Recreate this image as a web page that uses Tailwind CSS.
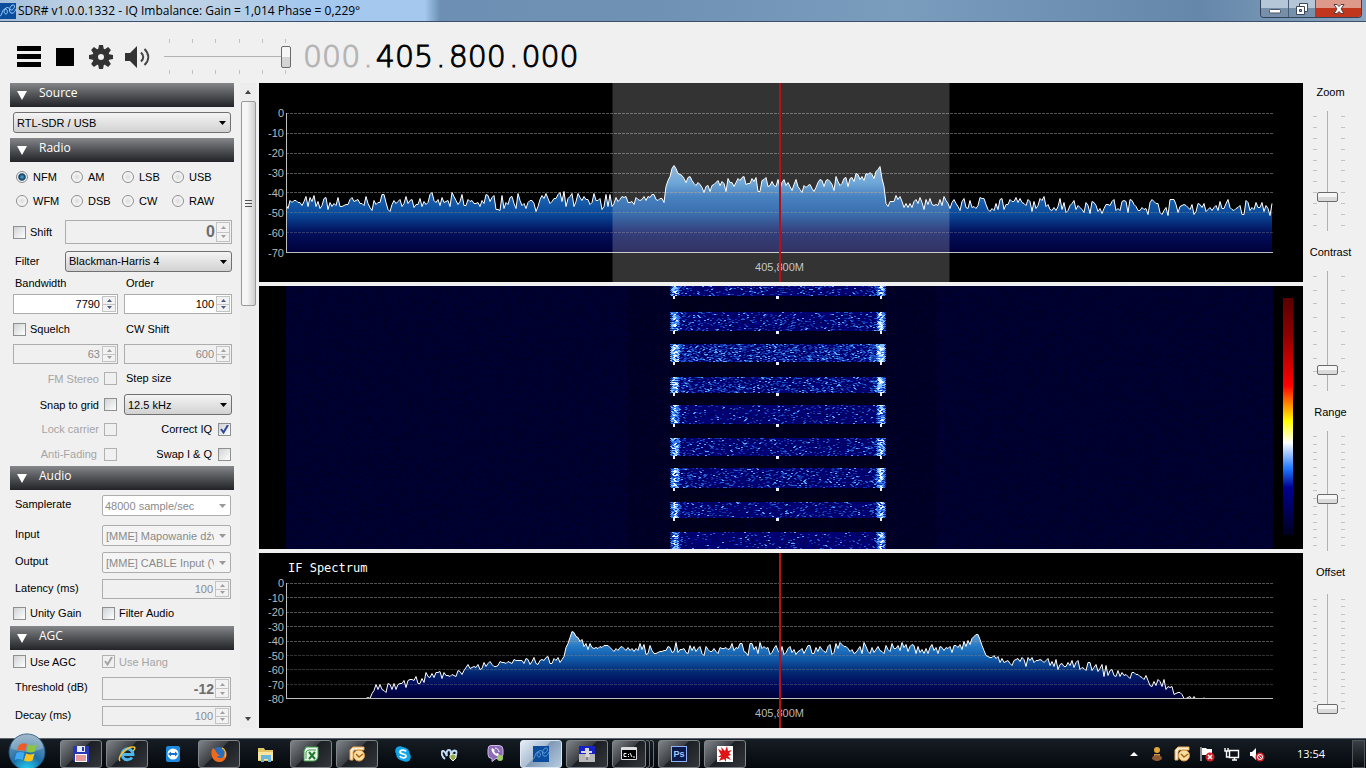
<!DOCTYPE html>
<html lang="en">
<head>
    <meta charset="UTF-8">
    <meta name="viewport" content="width=device-width, initial-scale=1.0">
    <title>SDR# v1.0.0.1332</title>
    <script src="https://cdn.jsdelivr.net/npm/@tailwindcss/browser@4"></script>
</head>
<body class="h-screen flex flex-col overflow-hidden bg-[#f0f0f0] text-black text-[11px] leading-[14px] font-['Liberation_Sans',Arial,sans-serif]">

    <!-- Title bar -->
    <header class="h-[22px] shrink-0 flex items-start justify-between border-b border-[#3c4f68] bg-[linear-gradient(90deg,#a4bfdb_0,#c3d6e8_100px,#b9cfe5_230px,#a4c8ee_300px,#a4c8ee_425px,#6c8fb3_440px,#6f92b4_650px,#7a9cbd_900px,#6587aa_1200px,#8aa5c0_1366px)]">
        <div class="flex items-center gap-[2px] h-[21px]">
            <svg class="w-4 h-4" viewBox="0 0 16 16"><rect width="16" height="16" fill="#0b4d9c"/><path d="M0 13c2 0 2-7 5-7s3 5 1 5-3-4 0-6 4 3 6 2 4-5 1-5-5 7-2 8 4-2 5-4" fill="none" stroke="#9fd0ff"/></svg>
            <h1 class="text-[12px] leading-[16px] font-['Open_Sans',sans-serif]">SDR# v1.0.0.1332 - IQ Imbalance: Gain = 1,014 Phase = 0,229°</h1>
        </div>
        <div class="flex h-[18px] mr-1 rounded-b-[4px] overflow-hidden border border-t-0 border-[#33445a]">
            <button aria-label="Minimize" class="w-[28px] flex items-center justify-center border-r border-[#4a5d74] bg-linear-to-b from-[#b4c6d8] from-50% to-[#7690ab] to-50%">
                <svg width="12" height="10" viewBox="0 0 12 10"><rect x=".5" y="5.500" width="11" height="3.500" rx="1" fill="#fff" stroke="#4b5462"/></svg>
            </button>
            <button aria-label="Restore" class="w-[27px] flex items-center justify-center border-r border-[#4a5d74] bg-linear-to-b from-[#b4c6d8] from-50% to-[#7690ab] to-50%">
                <svg width="12" height="12" viewBox="0 0 12 12" fill="#fff" stroke="#3f4858"><path d="M3.500.5h8v8h-8z"/><path d="M.5 3.500h8v8h-8z"/><path d="M3.500 6.500h2v2h-2z" fill="#8095ad"/></svg>
            </button>
            <button aria-label="Close" class="w-[45px] flex items-center justify-center bg-linear-to-b from-[#dd9a8b] from-50% to-[#c1371d] to-50%">
                <svg width="12" height="10" viewBox="0 0 12 10"><path d="M1 .5h3l2 2 2-2h3L8 5l3 4.500H8l-2-2-2 2H1L4 5z" fill="#fff" stroke="#5a3a3a"/></svg>
            </button>
        </div>
    </header>

    <!-- Toolbar -->
    <div class="h-[61px] shrink-0 flex items-center pl-[17px] pt-[8px]">
        <button aria-label="Menu"><svg width="24" height="22" viewBox="0 0 24 22"><path d="M0 0h24v5H0zM0 8h24v5H0zM0 16h24v5H0z"/></svg></button>
        <button aria-label="Stop" class="ml-[15px] size-[18px] bg-black"></button>
        <button aria-label="Settings" class="ml-[15px]">
            <svg width="24" height="24" viewBox="0 0 24 24"><g fill="#333"><circle cx="12" cy="12" r="8.500"/><g id="tooth"><path d="M10 0h4l1 5H9zM10 24h4l1-5H9z"/></g><use href="#tooth" transform="rotate(45 12 12)"/><use href="#tooth" transform="rotate(90 12 12)"/><use href="#tooth" transform="rotate(135 12 12)"/></g><circle cx="12" cy="12" r="3" fill="#f0f0f0"/></svg>
        </button>
        <button aria-label="Mute" class="ml-[11px]">
            <svg width="26" height="24" viewBox="0 0 26 24"><path d="M1 8h5l7-7v22l-7-7H1z" fill="#333"/><path d="M17 7.500c3 3 3 6 0 9M20.500 4c5 5 5 11 0 16" fill="none" stroke="#444" stroke-width="2"/></svg>
        </button>
        <div class="ml-[14px] w-[127px] flex flex-col">
            <div data-ticks="6" class="flex justify-between px-[5px]"></div>
            <input type="range" aria-label="Volume" min="0" max="100" value="100" class="my-[2px] appearance-none w-full h-[23px] bg-[linear-gradient(#b2b2b2,#b2b2b2)] bg-[length:100%_1px] bg-center bg-no-repeat [&::-webkit-slider-thumb]:appearance-none [&::-webkit-slider-thumb]:w-[10px] [&::-webkit-slider-thumb]:h-[22px] [&::-webkit-slider-thumb]:rounded-[2px] [&::-webkit-slider-thumb]:border [&::-webkit-slider-thumb]:border-[#6b6b6b] [&::-webkit-slider-thumb]:bg-linear-to-b [&::-webkit-slider-thumb]:from-[#f6f6f6] [&::-webkit-slider-thumb]:from-50% [&::-webkit-slider-thumb]:to-[#d4d4d4] [&::-webkit-slider-thumb]:to-50%">
            <div data-ticks="6" class="flex justify-between px-[5px]"></div>
        </div>
        <div class="ml-[12px] flex text-[30px] leading-[36px] font-extralight font-['DejaVu_Sans',sans-serif] [-webkit-text-stroke:1px_currentColor]">
            <span class="text-[#b4b4b4]">000<span class="px-[3px]">.</span></span>
            <span>405<span class="px-[3px]">.</span>800<span class="px-[3px]">.</span>000</span>
        </div>
    </div>

    <main class="flex-1 min-h-0 flex pb-[10px]">

        <!-- Side panel -->
        <aside class="w-[259px] shrink-0 flex pl-[10px] gap-[6px] overflow-hidden">
            <div class="w-[224px] overflow-hidden">
                <h2 class="h-[24px] flex items-center gap-[12px] pl-[7px] bg-linear-to-b from-[#86878a] to-[#222428] text-white text-[12px] leading-[20px] font-['Open_Sans',sans-serif]"><svg width="10" height="9"><path d="M0 0h10L5 9z" fill="#fff"/></svg><span class="pb-[4px]">Source</span></h2>
                <div class="h-[31px] flex items-center pl-[3px] pr-[3px]">
                    <div data-select class="relative w-full"><select aria-label="Source" class="appearance-none block w-full h-[21px] pl-[3px] rounded-[3px] border border-[#707070] bg-linear-to-b from-[#f4f4f4] to-[#d2d2d2]"><option>RTL-SDR / USB</option></select></div>
                </div>

                <h2 class="h-[24px] flex items-center gap-[12px] pl-[7px] bg-linear-to-b from-[#86878a] to-[#222428] text-white text-[12px] leading-[20px] font-['Open_Sans',sans-serif]"><svg width="10" height="9"><path d="M0 0h10L5 9z" fill="#fff"/></svg><span class="pb-[4px]">Radio</span></h2>
                <div class="pl-[3px] pr-[2px]">
                    <div id="modes" class="grid grid-cols-[55px_51px_50px_1fr] auto-rows-[24px] items-center pt-[3px] pl-[3px]"></div>
                    <div class="h-[38px] flex items-center">
                        <label class="w-[52px] flex items-center gap-[4px]"><input type="checkbox" class="appearance-none size-[13px] border border-[#8e8f8f] bg-linear-to-br from-[#d0d2d4] to-white">Shift</label>
                        <div data-spin class="flex-1 flex h-[24px] border border-[#adadad] text-[#6d6d6d]"><input type="text" aria-label="Shift" value="0" disabled class="w-0 flex-1 text-right text-[16px] font-bold pr-[1px]"></div>
                    </div>
                    <div class="h-[20px] flex items-center">
                        <label for="filter" class="w-[52px] pl-[2px]">Filter</label>
                        <div data-select class="relative flex-1"><select id="filter" class="appearance-none block w-full h-[21px] pl-[3px] rounded-[3px] border border-[#707070] bg-linear-to-b from-[#f4f4f4] to-[#d2d2d2]"><option>Blackman-Harris 4</option></select></div>
                    </div>
                    <div class="grid grid-cols-[105px_1fr] gap-x-[6px] items-center">
                        <label for="bandwidth" class="h-[23px] leading-[24px] pl-[2px]">Bandwidth</label>
                        <label for="order" class="h-[23px] leading-[24px] pl-[2px]">Order</label>
                        <div data-spin class="flex h-[20px] border border-[#adadad] bg-white"><input type="text" id="bandwidth" value="7790" class="w-0 flex-1 text-right pr-[2px]"></div>
                        <div data-spin class="flex h-[20px] border border-[#adadad] bg-white"><input type="text" id="order" value="100" class="w-0 flex-1 text-right pr-[2px]"></div>
                        <label class="h-[30px] flex items-center gap-[4px]"><input type="checkbox" class="appearance-none size-[13px] border border-[#8e8f8f] bg-linear-to-br from-[#d0d2d4] to-white">Squelch</label>
                        <label for="cwshift" class="h-[30px] leading-[30px] pl-[2px]">CW Shift</label>
                        <div data-spin class="flex h-[20px] border border-[#adadad] text-[#8a8a8a]"><input type="text" aria-label="Squelch level" value="63" disabled class="w-0 flex-1 text-right pr-[2px]"></div>
                        <div data-spin class="flex h-[20px] border border-[#adadad] text-[#8a8a8a]"><input type="text" id="cwshift" value="600" disabled class="w-0 flex-1 text-right pr-[2px]"></div>
                        <label class="h-[29px] flex items-center justify-end gap-[5px] pr-[1px] text-[#a5a5a5]">FM Stereo<input type="checkbox" disabled class="appearance-none size-[13px] border border-[#b1b1b1]"></label>
                        <label for="step" class="h-[29px] leading-[29px] pl-[2px]">Step size</label>
                        <label class="h-[23px] flex items-center justify-end gap-[5px] pr-[1px]">Snap to grid<input type="checkbox" class="appearance-none size-[13px] border border-[#8e8f8f] bg-linear-to-br from-[#d0d2d4] to-white"></label>
                        <div data-select class="relative"><select id="step" class="appearance-none block w-full h-[21px] pl-[3px] rounded-[3px] border border-[#707070] bg-linear-to-b from-[#f4f4f4] to-[#d2d2d2]"><option>12.5 kHz</option></select></div>
                        <label class="h-[26px] flex items-center justify-end gap-[5px] pr-[1px] text-[#a5a5a5]">Lock carrier<input type="checkbox" disabled class="appearance-none size-[13px] border border-[#b1b1b1]"></label>
                        <label class="h-[26px] relative flex items-center justify-end gap-[6px] pr-[1px]">Correct IQ<input type="checkbox" checked class="peer appearance-none size-[13px] border border-[#8e8f8f] bg-linear-to-br from-[#d0d2d4] to-white"><svg class="hidden peer-checked:block absolute right-[3px]" width="9" height="9" viewBox="0 0 9 9"><path d="M1 4l2.500 3.500L8 0" fill="none" stroke="#31479e" stroke-width="2"/></svg></label>
                        <label class="h-[24px] flex items-center justify-end gap-[7px] pr-[1px] text-[#a5a5a5]">Anti-Fading<input type="checkbox" disabled class="appearance-none size-[13px] border border-[#b1b1b1]"></label>
                        <label class="h-[24px] flex items-center justify-end gap-[6px] pr-[1px]">Swap I &amp; Q<input type="checkbox" class="appearance-none size-[13px] border border-[#8e8f8f] bg-linear-to-br from-[#d0d2d4] to-white"></label>
                    </div>
                </div>

                <h2 class="h-[24px] flex items-center gap-[12px] pl-[7px] bg-linear-to-b from-[#86878a] to-[#222428] text-white text-[12px] leading-[20px] font-['Open_Sans',sans-serif]"><svg width="10" height="9"><path d="M0 0h10L5 9z" fill="#fff"/></svg><span class="pb-[4px]">Audio</span></h2>
                <div class="pl-[3px] pr-[3px] pb-[3px] grid grid-cols-[89px_1fr] items-center">
                    <label for="rate" class="pl-[2px] pb-[3px]">Samplerate</label>
                    <div class="h-[31px] flex items-center"><div data-select class="relative w-full text-[#8a8a8a]"><select id="rate" disabled class="appearance-none block w-full h-[21px] pl-[2px] pr-[16px] rounded-[2px] border border-[#adadad] bg-white opacity-100"><option>48000 sample/sec</option></select></div></div>
                    <label for="in" class="pl-[2px] pb-[3px]">Input</label>
                    <div class="h-[29px] flex items-center"><div data-select class="relative w-full text-[#8a8a8a]"><select id="in" disabled class="appearance-none block w-full h-[21px] pl-[3px] pr-[16px] rounded-[2px] border border-[#adadad] bg-[#f4f4f4] opacity-100"><option>[MME] Mapowanie dźwięku</option></select></div></div>
                    <label for="out" class="pl-[2px] pb-[3px]">Output</label>
                    <div class="h-[25px] flex items-center"><div data-select class="relative w-full text-[#8a8a8a]"><select id="out" disabled class="appearance-none block w-full h-[21px] pl-[3px] pr-[16px] rounded-[2px] border border-[#adadad] bg-[#f4f4f4] opacity-100"><option>[MME] CABLE Input (VB-Audio)</option></select></div></div>
                    <label for="latency" class="pl-[2px] pb-[3px]">Latency (ms)</label>
                    <div class="h-[28px] flex items-center"><div data-spin class="w-full flex h-[20px] border border-[#adadad] text-[#8a8a8a]"><input type="text" id="latency" value="100" disabled class="w-0 flex-1 text-right pr-[2px]"></div></div>
                    <label class="h-[20px] flex items-center gap-[4px]"><input type="checkbox" class="appearance-none size-[13px] border border-[#8e8f8f] bg-linear-to-br from-[#d0d2d4] to-white">Unity Gain</label>
                    <label class="h-[20px] flex items-center gap-[4px]"><input type="checkbox" class="appearance-none size-[13px] border border-[#8e8f8f] bg-linear-to-br from-[#d0d2d4] to-white">Filter Audio</label>
                </div>

                <h2 class="h-[24px] flex items-center gap-[12px] pl-[7px] bg-linear-to-b from-[#86878a] to-[#222428] text-white text-[12px] leading-[20px] font-['Open_Sans',sans-serif]"><svg width="10" height="9"><path d="M0 0h10L5 9z" fill="#fff"/></svg><span class="pb-[4px]">AGC</span></h2>
                <div class="pl-[3px] pr-[3px] grid grid-cols-[89px_1fr] items-center">
                    <label class="h-[23px] flex items-center gap-[4px]"><input type="checkbox" class="appearance-none size-[13px] border border-[#8e8f8f] bg-linear-to-br from-[#d0d2d4] to-white">Use AGC</label>
                    <label class="h-[23px] relative flex items-center gap-[4px] text-[#a5a5a5]"><input type="checkbox" checked disabled class="peer appearance-none size-[13px] border border-[#b1b1b1]"><svg class="hidden peer-checked:block absolute left-[2px]" width="9" height="9" viewBox="0 0 9 9"><path d="M1 4l2.500 3.500L8 0" fill="none" stroke="#a5a5a5" stroke-width="2"/></svg>Use Hang</label>
                    <label for="threshold" class="pl-[2px] pb-[3px]">Threshold (dB)</label>
                    <div class="h-[31px] flex items-center"><div data-spin class="w-full flex h-[23px] border border-[#adadad] text-[#6d6d6d]"><input type="text" id="threshold" value="-12" disabled class="w-0 flex-1 text-right text-[14px] font-bold pr-[1px]"></div></div>
                    <label for="decay" class="pl-[2px] pb-[3px]">Decay (ms)</label>
                    <div class="h-[24px] flex items-center"><div data-spin class="w-full flex h-[20px] border border-[#adadad] text-[#8a8a8a]"><input type="text" id="decay" value="100" disabled class="w-0 flex-1 text-right pr-[2px]"></div></div>
                </div>
            </div>
            <!-- Scrollbar -->
            <div class="w-[16px] flex flex-col items-center bg-[#ededed]">
                <svg class="h-[18px] shrink-0" width="8" height="18"><path d="M1 11l3-4 3 4z" fill="#444"/></svg>
                <div class="h-[205px] w-[15px] rounded-[2px] border border-[#9a9a9a] bg-linear-to-r from-[#f5f5f5] from-40% to-[#cfcfcf] flex flex-col items-center justify-center gap-[2px]">
                    <i class="w-[7px] h-px bg-[#555]"></i><i class="w-[7px] h-px bg-[#555]"></i><i class="w-[7px] h-px bg-[#555]"></i>
                </div>
                <svg class="mt-auto shrink-0" width="8" height="17"><path d="M1 6l3 4 3-4z" fill="#444"/></svg>
            </div>
        </aside>

        <!-- Spectrum, waterfall and IF spectrum -->
        <section class="flex-1 min-w-0 flex flex-col gap-[4px]">
            <div class="relative basis-[199px] grow-[199] min-h-0 bg-black text-[#b9b9b9] grid grid-cols-[27px_1fr_30px] grid-rows-[30px_1fr_29px]">
                <div data-scale="7" class="col-start-1 row-start-2 flex flex-col justify-between -my-[7px] pr-[2px] text-right"></div>
                <div class="col-start-2 row-start-2 relative"><canvas id="spectrum" class="absolute inset-0 size-full"></canvas></div>
                <div class="col-start-2 row-start-3 flex items-center justify-center pb-[2px]">405,800M</div>
                <div class="absolute inset-y-0 left-1/2 w-[337px] -translate-x-1/2 bg-white/20"></div>
                <div class="absolute inset-y-0 left-1/2 -ml-[2px] w-[2px] bg-[#b4121a]"></div>
            </div>
            <div class="basis-[263px] grow-[263] min-h-0 bg-black grid grid-cols-[27px_1fr_30px]">
                <div class="col-start-2 relative"><canvas id="waterfall" class="absolute inset-0 size-full"></canvas></div>
                <div class="ml-[10px] mt-[12px] mb-[14px] w-[10px] bg-[linear-gradient(#5a0000_0%,#8b0000_15%,#ff0000_37%,#ff8c00_45%,#ffff00_52%,#ffffff_61%,#1e78ff_72%,#000091_80%,#000020_100%)]"></div>
            </div>
            <div class="relative basis-[175px] grow-[175] min-h-0 bg-black text-[#b9b9b9] grid grid-cols-[27px_1fr_30px] grid-rows-[30px_1fr_29px]">
                <div class="col-start-2 row-start-1 flex items-center pl-[2px] text-white text-[12px] font-['DejaVu_Sans_Mono',monospace]">IF Spectrum</div>
                <div data-scale="8" class="col-start-1 row-start-2 flex flex-col justify-between -my-[7px] pr-[2px] text-right"></div>
                <div class="col-start-2 row-start-2 relative"><canvas id="ifspectrum" class="absolute inset-0 size-full"></canvas></div>
                <div class="col-start-2 row-start-3 flex items-center justify-center pb-[2px]">405,800M</div>
                <div class="absolute inset-y-0 left-1/2 -ml-[2px] w-[2px] bg-[#b4121a]"></div>
            </div>
        </section>

        <!-- Right sliders -->
        <aside id="sliders" class="w-[63px] shrink-0 flex flex-col items-center gap-[12px] pr-[11px]"></aside>
    </main>

    <!-- Taskbar -->
    <footer class="relative h-[30px] shrink-0 flex items-center border-t border-[#5b6570] bg-linear-to-b from-[#161d24] to-[#05090d] text-white">
        <button aria-label="Start" class="absolute left-[8px] -top-[6px] size-[38px]">
            <svg viewBox="0 0 38 38"><defs><radialGradient id="orb" cx=".5" cy="1" r=".95"><stop offset="0" stop-color="#25d6f5"/><stop offset=".45" stop-color="#1a6fa8"/><stop offset="1" stop-color="#7d9db5"/></radialGradient></defs><circle cx="19" cy="19" r="18" fill="url(#orb)" stroke="#24507a"/><path d="M3 15a16 14 0 0 1 32 0c-8 5-24 5-32 0z" fill="#fff" opacity=".25"/><path d="M11 12q4-3 8-1l-2 7q-4-2-8 0z" fill="#f05a24"/><path d="M20.500 11.500q4 2 8.500 0l-2 7q-4 2-8.500 0z" fill="#8cc63f"/><path d="M8.500 20q4-2 8 0l-2 7q-4-2-8 0z" fill="#3fa9f5"/><path d="M18 20.500q4 2 8.500 0l-2 7q-4 2-8.500 0z" fill="#fcc419"/></svg>
        </button>
        <nav class="ml-[60px] flex gap-[4px]">
            <button aria-label="Save" class="w-[42px] h-[28px] flex items-center justify-center rounded-[3px] border border-[#7f858a] bg-[linear-gradient(135deg,#80858a_0%,#3a3e43_45%,#1b1f24_46%,#33373c_100%)]"><svg width="16" height="16"><path d="M0 0h16v16H2l-2-2z" fill="#2836b8"/><path d="M4 0h8v6H4z" fill="#e8ecf5"/><path d="M9 1h2v4H9z" fill="#2836b8"/><path d="M2 8h12v8H2z" fill="#fff"/><path d="M3 10h10M3 12h10M3 14h10" stroke="#c33"/></svg></button>
            <button aria-label="Internet Explorer" class="w-[42px] h-[28px] flex items-center justify-center rounded-[3px] border border-[#7f858a] bg-[linear-gradient(135deg,#80858a_0%,#3a3e43_45%,#1b1f24_46%,#33373c_100%)]"><svg width="18" height="18"><path d="M14 12.500a5.500 5.500 0 1 1 1-3H4" fill="none" stroke="#4db8f0" stroke-width="3"/><path d="M2 16C-1 12 9 1 16 2c2 1 0 3-1 4" fill="none" stroke="#f2c230" stroke-width="1.500"/></svg></button>
            <button aria-label="TeamViewer" class="w-[42px] h-[28px] flex items-center justify-center"><svg width="14" height="16"><rect width="14" height="16" rx="2" fill="#1a8ae0"/><circle cx="7" cy="8" r="5.500" fill="#fff"/><path d="M2 8l3-2.500V7h4V5.500L12 8l-3 2.500V9H5v1.500z" fill="#1a70c8"/></svg></button>
            <button aria-label="Firefox" class="w-[42px] h-[28px] flex items-center justify-center rounded-[3px] border border-[#7f858a] bg-[linear-gradient(135deg,#80858a_0%,#3a3e43_45%,#1b1f24_46%,#33373c_100%)]"><svg width="16" height="16"><circle cx="8" cy="8" r="7" fill="#2a6db8"/><path d="M2 2c-4 6 0 14 6 14s9-6 7-11c0 3-2 3-2 5-2 3-6 3-7 0 1 0 3 0 3-1-3 0-3-3-4-3 0-2-2-3-3-4z" fill="#ee6a1c"/><path d="M11 2c3 1 4 5 3 9" fill="none" stroke="#f9b233" stroke-width="1.500"/></svg></button>
            <button aria-label="Explorer" class="w-[42px] h-[28px] flex items-center justify-center"><svg width="17" height="16"><path d="M1 2h6l1 2h8v11H1z" fill="#e3c565"/><path d="M1 6h15v8H1z" fill="#f7e6a2"/><path d="M4 16V9h10v7h-3v-3H7v3z" fill="#6cb6dc"/></svg></button>
            <button aria-label="Excel" class="w-[42px] h-[28px] flex items-center justify-center rounded-[3px] border border-[#7f858a] bg-[linear-gradient(135deg,#80858a_0%,#3a3e43_45%,#1b1f24_46%,#33373c_100%)]"><svg width="16" height="16"><path d="M3 1h12v10q-1 4-4 4H1V5z" fill="#e9f5e9" stroke="#3d9a4a"/><path d="M3 13V6q1-2 3-2h7" fill="none" stroke="#3d9a4a"/><path d="M6 6l6 7M12 6l-6 7" stroke="#1f7a2e" stroke-width="2"/></svg></button>
            <button aria-label="Outlook" class="w-[42px] h-[28px] flex items-center justify-center rounded-[3px] border border-[#7f858a] bg-[linear-gradient(135deg,#80858a_0%,#3a3e43_45%,#1b1f24_46%,#33373c_100%)]"><svg width="16" height="16"><path d="M4 1h11v3H5L4 6v8H1V4z" fill="#fbeed6" stroke="#e8a84c"/><circle cx="10" cy="9.500" r="5.500" fill="#fbdf9e" stroke="#d8964a"/><path d="M7 8l3 3 4-3" fill="none" stroke="#a8641a" stroke-width="1.500"/></svg></button>
            <button aria-label="Skype" class="w-[42px] h-[28px] flex items-center justify-center"><svg width="16" height="16"><circle cx="5" cy="5" r="4.800" fill="#12a5e8"/><circle cx="11" cy="11" r="4.800" fill="#12a5e8"/><circle cx="8" cy="8" r="6.800" fill="#12a5e8"/><path d="M11 5.500C10 3.500 5 3.500 5 6s6 1.500 6 4-5 2.500-6 0" fill="none" stroke="#fff" stroke-width="1.800"/></svg></button>
            <button aria-label="Malwarebytes" class="w-[42px] h-[28px] flex items-center justify-center"><svg width="17" height="16"><path d="M4 13C0 10 0 5 2 5s3 3 4 5c-1-4 0-6 2-6s2 2 2 5c1-4 3-5 5-4 1 1 0 4-1 6" fill="none" stroke="#c3dcf5" stroke-width="2"/><path d="M9 9l3-1 3 1v3l-3 3-3-3z" fill="#8fae4a" stroke="#eee"/></svg></button>
            <button aria-label="Viber" class="w-[42px] h-[28px] flex items-center justify-center"><svg width="17" height="17"><path d="M4 .5h8q4 0 4 4v5q0 4-4 4H9l-4 3v-3q-4 0-4-4v-5q0-4 3-4z" fill="#8d6cb5" stroke="#cdb9e4"/><path d="M5 3c-2 2 2 8 6 8l1-2-2-1-1 1-2-3 1-1z" fill="#fff"/><path d="M8 3c2 0 4 2 4 4" fill="none" stroke="#fff"/><circle cx="13" cy="13" r="3" fill="#9ccc65"/></svg></button>
            <button aria-label="SDR#" class="w-[42px] h-[28px] flex items-center justify-center rounded-[3px] border border-[#dfe8f2] bg-[linear-gradient(135deg,#e6eef6_0%,#a9bdd2_45%,#7f98b3_46%,#b5cbe2_100%)]"><svg width="16" height="16"><rect width="16" height="16" fill="#0b4d9c"/><path d="M0 13c2 0 2-7 5-7s3 5 1 5-3-4 0-6 4 3 6 2 4-5 1-5-5 7-2 8 4-2 5-4" fill="none" stroke="#5f9fde"/></svg></button>
            <button aria-label="Tracker" class="w-[42px] h-[28px] flex items-center justify-center rounded-[3px] border border-[#7f858a] bg-[linear-gradient(135deg,#80858a_0%,#3a3e43_45%,#1b1f24_46%,#33373c_100%)]"><svg width="16" height="16"><path d="M0 0h16v8H0z" fill="#1622c8"/><path d="M0 8h16v8H0z" fill="#b9b9b9"/><path d="M6 2h4v3h3v2h-3l1 4H6l1-4H2V5h4z" fill="#d8d8d8"/><path d="M8 11v3" stroke="#555"/></svg></button>
            <button aria-label="Command prompt" class="w-[42px] h-[28px] flex">
                <span class="w-[34px] h-full flex items-center justify-center rounded-[3px] border border-[#7f858a] bg-[linear-gradient(135deg,#80858a_0%,#3a3e43_45%,#1b1f24_46%,#33373c_100%)]"><svg width="16" height="13"><path d="M.5.5h15v12H.5z" fill="#000" stroke="#ddd"/><path d="M1 2h14" stroke="#ddd" stroke-width="2"/><path d="M5.500 6.500H3v3h2.500M7.500 7v1M7.500 9v1M9 6l2 4M12 10h2" fill="none" stroke="#fff"/></svg></span>
                <i class="w-[4px] h-full border-r border-y border-[#6a7075] rounded-r-[3px]"></i><i class="w-[4px] h-full border-r border-y border-[#6a7075] rounded-r-[3px]"></i>
            </button>
            <button aria-label="Photoshop" class="w-[42px] h-[28px] flex items-center justify-center rounded-[3px] border border-[#7f858a] bg-[linear-gradient(135deg,#80858a_0%,#3a3e43_45%,#1b1f24_46%,#33373c_100%)]"><span class="size-[16px] border border-[#8fb2ff] bg-[#0a1a4a] text-[#a9c4ff] text-[9px] leading-[14px] font-bold">Ps</span></button>
            <button aria-label="IrfanView" class="w-[42px] h-[28px] flex items-center justify-center rounded-[3px] border border-[#7f858a] bg-[linear-gradient(135deg,#80858a_0%,#3a3e43_45%,#1b1f24_46%,#33373c_100%)]"><svg width="16" height="16"><rect width="16" height="16" fill="#fff"/><path d="M1 3l4 2-1-4 4 4 2-5 1 5 4-1-3 3 2 2-3 1 3 4-5-2v4l-2-3-5 2 2-4-3 0 3-2z" fill="#e01414"/></svg></button>
        </nav>
        <div class="ml-auto flex items-center h-full">
            <div class="flex items-center gap-[9px]">
                <svg width="8" height="4"><path d="M0 4l4-4 4 4z" fill="#fff"/></svg>
                <svg width="16" height="16" class="ml-[2px]"><circle cx="8" cy="4" r="3" fill="#e0a63a"/><path d="M5 8h6v3H5z" fill="#d9953a"/><ellipse cx="8" cy="12" rx="5" ry="3" fill="#8c5a35"/></svg>
                <svg width="16" height="16"><path d="M4 1h11v3H5L4 6v8H1V4z" fill="#fbeed6" stroke="#e8a84c"/><circle cx="10" cy="9.500" r="5.500" fill="#fbdf9e" stroke="#d8964a"/><path d="M7 8l3 3 4-3" fill="none" stroke="#a8641a" stroke-width="1.500"/></svg>
                <svg width="16" height="16"><path d="M2 1v14" stroke="#fff"/><path d="M3 2h4l1 1h5v7H8L7 9H3z" fill="#fff"/><circle cx="11" cy="11" r="4.500" fill="#d0202a"/><path d="M9 9l4 4M13 9l-4 4" stroke="#fff" stroke-width="1.500"/></svg>
                <svg width="16" height="16" fill="none" stroke="#fff"><path d="M5.500 4.500h9v7h-9zM8 14h5M10.500 12v2M1 2v3h3V2M2.500 5v6H5" stroke-width="1.400"/></svg>
                <svg width="16" height="16"><path d="M1 6h2l4-4v12l-4-4H1z" fill="#fff"/><circle cx="11" cy="11" r="4.500" fill="#d0202a"/><circle cx="11" cy="11" r="2.500" fill="none" stroke="#fff"/><path d="M9 9l4 4" stroke="#fff"/></svg>
            </div>
            <time class="ml-[32px] text-[11px] font-['Open_Sans',sans-serif]">13:54</time>
            <button aria-label="Show desktop" class="ml-[27px] mr-px w-[13px] h-[28px] border border-[#50565c] bg-linear-to-b from-[#3a3f45] to-[#0a0e12]"></button>
        </div>
    </footer>

    <script>
        // Mode radio buttons
        const modes = ['NFM', 'AM', 'LSB', 'USB', 'WFM', 'DSB', 'CW', 'RAW'];
        document.getElementById('modes').innerHTML = modes.map((m, i) => `
            <label class="flex items-center gap-[5px]"><input type="radio" name="mode" ${i === 0 ? 'checked' : ''} class="appearance-none size-[12px] rounded-full border border-[#8e8f8f] bg-[radial-gradient(circle,#dcdcdc_0%,#f8f8f8_70%)] checked:bg-[radial-gradient(circle,#4fb0d8_0%,#123a5c_45%,#e8eef2_60%)]">${m}</label>`).join('');

        // Arrows of the drop-downs
        document.querySelectorAll('[data-select]').forEach(el => {
            const color = el.querySelector('select').disabled ? '#999' : '#000';
            el.insertAdjacentHTML('beforeend', `<svg class="absolute right-[5px] top-[9px] pointer-events-none" width="7" height="4"><path d="M0 0h7L3.500 4z" fill="${color}"/></svg>`);
        });

        // Up and down buttons of the number boxes
        document.querySelectorAll('[data-spin]').forEach(el => {
            const color = el.querySelector('input').disabled ? '#a0a0a0' : '#4a5a80';
            el.insertAdjacentHTML('beforeend', `
                <div class="w-[14px] my-px mr-px flex flex-col">
                    <button aria-label="Up" class="flex-1 flex items-center justify-center border border-[#c4c4c4] bg-[#f2f2f2]"><svg width="5" height="3"><path d="M0 3h5L2.500 0z" fill="${color}"/></svg></button>
                    <button aria-label="Down" class="flex-1 flex items-center justify-center border border-t-0 border-[#c4c4c4] bg-[#f2f2f2]"><svg width="5" height="3"><path d="M0 0h5L2.500 3z" fill="${color}"/></svg></button>
                </div>`);
        });

        // Right column
        const sliders = [['Zoom', 26, 11], ['Contrast', 15, 9], ['Range', 43, 15], ['Offset', 0, 16]];
        document.getElementById('sliders').innerHTML = sliders.map(([name, value, ticks]) => {
            const marks = '<i class="w-[4px] h-px bg-[#c4c4c4]"></i>'.repeat(ticks);
            return `<div class="flex flex-col items-center gap-[10px] last:gap-[13px]">
                <label for="${name}" class="h-[18px] leading-[18px] pl-[3px]">${name}</label>
                <div class="flex h-[120px]">
                    <div class="flex flex-col justify-between py-[5px]">${marks}</div>
                    <input type="range" id="${name}" min="0" max="100" value="${value}" class="mr-[3px] appearance-none w-[21px] h-[120px] [writing-mode:vertical-lr] [direction:rtl] bg-[linear-gradient(#b2b2b2,#b2b2b2)] bg-[length:1px_100%] bg-center bg-no-repeat [&::-webkit-slider-thumb]:appearance-none [&::-webkit-slider-thumb]:w-[21px] [&::-webkit-slider-thumb]:h-[10px] [&::-webkit-slider-thumb]:rounded-[2px] [&::-webkit-slider-thumb]:border [&::-webkit-slider-thumb]:border-[#6b6b6b] [&::-webkit-slider-thumb]:bg-linear-to-b [&::-webkit-slider-thumb]:from-[#f6f6f6] [&::-webkit-slider-thumb]:from-50% [&::-webkit-slider-thumb]:to-[#dadada] [&::-webkit-slider-thumb]:to-50%">
                    <div class="flex flex-col justify-between py-[5px]">${marks}</div>
                </div>
            </div>`;
        }).join('');

        document.querySelectorAll('[data-ticks]').forEach(el => {
            el.innerHTML = '<i class="w-px h-[4px] bg-[#c4c4c4]"></i>'.repeat(el.dataset.ticks);
        });

        document.querySelectorAll('[data-scale]').forEach(el => {
            for (let i = 0; i <= el.dataset.scale; i++) {
                el.innerHTML += `<span>${i ? -10 * i : 0}</span>`;
            }
        });

        let seed = 7;
        function rnd() {
            seed = (seed * 16807) % 2147483647;
            return seed / 2147483647;
        }

        function setup(id) {
            const c = document.getElementById(id);
            c.width = c.parentElement.clientWidth;
            c.height = c.parentElement.clientHeight;
            return [c.getContext('2d'), c.width, c.height];
        }

        // points: [position 0..987, level in dB, noise in dB]
        function level(points, x) {
            let i = 1;
            while (i < points.length - 1 && points[i][0] < x) i++;
            const a = points[i - 1], b = points[i];
            const t = Math.min(1, Math.max(0, (x - a[0]) / (b[0] - a[0])));
            return a[1] + (b[1] - a[1]) * t + (rnd() + rnd() - 1) * a[2];
        }

        function drawSpectrum(id, range, points, stops) {
            const [ctx, w, h] = setup(id);
            const trace = [];
            for (let x = points[0][0]; x <= points[points.length - 1][0]; x += 2) {
                const db = Math.max(-range, level(points, x));
                trace.push([x * w / 987, Math.round(-db / range * h) + 0.5]);
            }
            const fill = ctx.createLinearGradient(0, 0, 0, h);
            stops.forEach(([p, color]) => fill.addColorStop(p, color));
            ctx.beginPath();
            ctx.moveTo(trace[0][0], h);
            trace.forEach(([x, y]) => ctx.lineTo(x, y));
            ctx.lineTo(trace[trace.length - 1][0], h);
            ctx.fillStyle = fill;
            ctx.fill();

            // grid
            ctx.strokeStyle = 'rgba(150,150,150,0.55)';
            ctx.setLineDash([3, 1]);
            for (let i = 0; i < range / 10; i++) {
                const y = Math.round(i * 10 / range * (h - 1)) + 0.5;
                ctx.globalAlpha = i > 4 ? 0.6 : 1;
                ctx.beginPath();
                ctx.moveTo(0, y);
                ctx.lineTo(w, y);
                ctx.stroke();
            }
            ctx.globalAlpha = 1;
            ctx.setLineDash([]);
            ctx.beginPath();
            trace.forEach(([x, y]) => ctx.lineTo(x, y));
            ctx.strokeStyle = '#fff';
            ctx.stroke();
            ctx.fillStyle = '#c0c0c0';
            ctx.fillRect(0, h - 1, w, 1);
            ctx.fillRect(0, 0, 1, h);
        }

        function drawWaterfall() {
            const [ctx, w, h] = setup('waterfall');
            // [start, end, intensity] of each burst
            const bursts = [[0, 10, 0.35], [26, 45, 0.35], [58, 76, 0.9], [91, 107, 0.6], [119, 138, 0.25], [152, 170, 0.4], [182, 202, 0.45], [216, 232, 0.35], [246, 263, 0.2]];
            const s = h / 263, k = w / 987, left = 384, right = 598;
            for (let y = 0; y < 263; y++) {
                const burst = bursts.find(b => y >= b[0] && y < b[1]);
                for (let x = y % 2; x < 987; x += 2) {
                    const inside = x >= left && x <= right;
                    const v = rnd();
                    let color;
                    if (inside && burst) {
                        const edge = Math.min(Math.abs(x - left - 4), Math.abs(x - right + 4));
                        if (edge < 5) {
                            const glow = v * (1.5 - edge / 4) + burst[2] * 0.3;
                            color = glow > 0.95 ? '#eef8ff' : glow > 0.6 ? '#86c2ff' : glow > 0.3 ? '#2f78ee' : '#0c2cb0';
                        } else {
                            const p = burst[2] * (edge < 12 ? 0.8 : 0.55);
                            color = v < p * 0.14 ? '#62a8f8' : v < p * 0.45 ? '#2560d0' : v < p ? '#1030a8' : `rgb(0,0,${Math.round(85 + 50 * rnd())})`;
                        }
                    } else {
                        const base = x > 340 && x < 650 ? (inside ? 28 : 38) : 46;
                        color = `rgb(0,0,${Math.round(base + (v - 0.5) * 18)})`;
                    }
                    ctx.fillStyle = color;
                    ctx.fillRect(Math.floor(x * k), Math.floor(y * s), 3, 2);
                }
            }
            // carrier marks at the end of each burst
            ctx.fillStyle = '#e8f2ff';
            bursts.slice(0, 8).forEach(b => {
                ctx.fillRect(Math.round(490 * k), Math.round(b[1] * s), 3, 3);
                ctx.fillRect(Math.round(387 * k), Math.round(b[1] * s), 2, 3);
                ctx.fillRect(Math.round(594 * k), Math.round(b[1] * s), 2, 3);
            });
        }

        function draw() {
            seed = 7;
            drawSpectrum('spectrum', 70, [
                [0, -45, 5], [325, -43.5, 4], [372, -43, 4], [378, -42, 2], [384, -30, 2], [388, -25, 2], [394, -30, 3], [400, -35, 5],
                [550, -35.5, 4], [575, -32, 3], [588, -31, 2], [593, -26, 2], [597, -33, 2], [600, -44, 4], [660, -45, 5], [987, -47, 5]
            ], [[0, '#a8cdea'], [0.35, '#7fb0dc'], [0.5, '#4a90cc'], [0.6, '#1a62b0'], [0.72, '#0a4a9a'], [0.85, '#02105c'], [1, '#00003a']]);
            drawSpectrum('ifspectrum', 80, [
                [68, -80, 1], [84, -79, 2], [88, -73, 5], [130, -67, 5], [160, -63, 4], [190, -58, 4], [230, -53, 5], [276, -54, 2],
                [280, -46, 2], [286, -33, 1], [292, -38, 3], [302, -43, 4], [340, -46, 5], [500, -45, 5], [670, -45, 4],
                [682, -42, 3], [692, -35, 1], [700, -50, 3], [720, -54, 4], [760, -54, 5], [800, -58, 5], [850, -64, 5], [890, -73, 4], [900, -79, 2], [918, -80, 1]
            ], [[0, '#a8cdea'], [0.42, '#6ea6d8'], [0.55, '#2378c4'], [0.65, '#105aa8'], [0.78, '#03246e'], [0.88, '#000a5a'], [1, '#000034']]);
            drawWaterfall();
        }
        // redraw whenever the plots get their size
        const watcher = new ResizeObserver(draw);
        document.querySelectorAll('canvas').forEach(c => watcher.observe(c.parentElement));
    </script>
</body>
</html>
